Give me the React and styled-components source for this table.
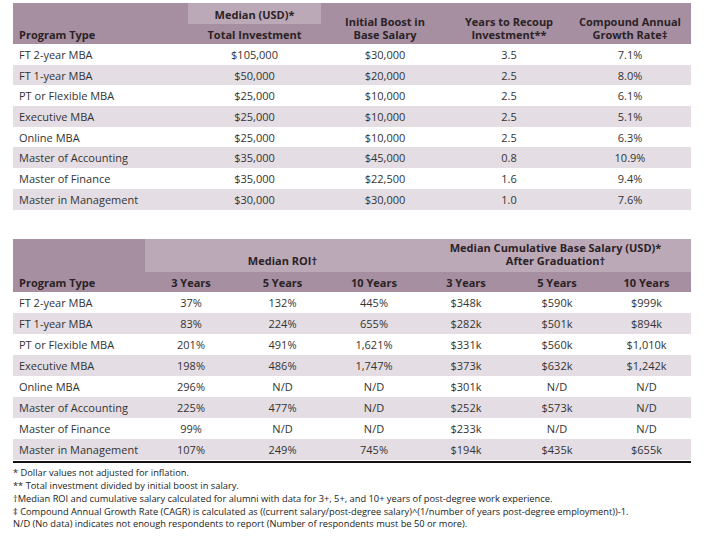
import React from "react";
import styled, { createGlobalStyle } from "styled-components";

const GlobalStyle = createGlobalStyle`
  body {
    margin: 0;
    background: #ffffff;
    font-family: "Open Sans", "Liberation Sans", sans-serif;
  }
`;

const Page = styled.div`
  width: 678px;
  padding: 3px 0 0 13px;
`;

const Table = styled.table`
  width: 678px;
  border-collapse: collapse;
  table-layout: fixed;
  margin-bottom: ${props => props.gap || 0}px;
  font-size: 11px;
  color: #333333;
`;

const Col = styled.col`
  width: ${props => props.w}px;
`;

const Th = styled.th`
  box-sizing: border-box;
  background: ${props => (props.light ? "#bba9b8" : "#a68fa1")};
  color: #2b2226;
  font-weight: 700;
  font-size: 11px;
  line-height: ${props => props.lh || 13}px;
  height: ${props => props.h || 20}px;
  padding: 0 ${props => (props.left ? "6px" : "2px")} ${props => props.pb ?? 3}px;
  text-align: ${props => (props.left ? "left" : "center")};
  vertical-align: bottom;
  white-space: nowrap;
`;

const Row = styled.tr`
  background: ${props => (props.shaded ? "#e4dee4" : "#ffffff")};
`;

const Td = styled.td`
  box-sizing: border-box;
  height: ${props => props.h || 20.7}px;
  padding: 0 ${props => (props.left ? "6px" : "2px")};
  text-align: ${props => (props.left ? "left" : "center")};
  vertical-align: middle;
  white-space: nowrap;
`;

const Rule = styled.div`
  width: 678px;
  height: 2px;
  background: #111111;
  margin-top: 1px;
`;

const Notes = styled.div`
  padding-top: 4px;
  font-size: 9.3px;
  line-height: 12.75px;
  color: #222222;
  white-space: nowrap;
`;

const investment = [
  ["FT 2-year MBA", "$105,000", "$30,000", "3.5", "7.1%"],
  ["FT 1-year MBA", "$50,000", "$20,000", "2.5", "8.0%"],
  ["PT or Flexible MBA", "$25,000", "$10,000", "2.5", "6.1%"],
  ["Executive MBA", "$25,000", "$10,000", "2.5", "5.1%"],
  ["Online MBA", "$25,000", "$10,000", "2.5", "6.3%"],
  ["Master of Accounting", "$35,000", "$45,000", "0.8", "10.9%"],
  ["Master of Finance", "$35,000", "$22,500", "1.6", "9.4%"],
  ["Master in Management", "$30,000", "$30,000", "1.0", "7.6%"],
];

const returns = [
  ["FT 2-year MBA", "37%", "132%", "445%", "$348k", "$590k", "$999k"],
  ["FT 1-year MBA", "83%", "224%", "655%", "$282k", "$501k", "$894k"],
  ["PT or Flexible MBA", "201%", "491%", "1,621%", "$331k", "$560k", "$1,010k"],
  ["Executive MBA", "198%", "486%", "1,747%", "$373k", "$632k", "$1,242k"],
  ["Online MBA", "296%", "N/D", "N/D", "$301k", "N/D", "N/D"],
  ["Master of Accounting", "225%", "477%", "N/D", "$252k", "$573k", "N/D"],
  ["Master of Finance", "99%", "N/D", "N/D", "$233k", "N/D", "N/D"],
  ["Master in Management", "107%", "249%", "745%", "$194k", "$435k", "$655k"],
];

const notes = [
  "* Dollar values not adjusted for inflation.",
  "** Total investment divided by initial boost in salary.",
  "\u2020Median ROI and cumulative salary calculated for alumni with data for 3+, 5+, and 10+ years of post-degree work experience.",
  "\u2021 Compound Annual Growth Rate (CAGR) is calculated as ((current salary/post-degree salary)^(1/number of years post-degree employment))-1.",
  "N/D (No data) indicates not enough respondents to report (Number of respondents must be 50 or more).",
];

const years = ["3 Years", "5 Years", "10 Years", "3 Years", "5 Years", "10 Years"];

export default function App() {
  return (
    <>
      <GlobalStyle />
      <Page>
        <Table gap={29}>
          <colgroup>
            <Col w={175} />
            <Col w={133} />
            <Col w={128} />
            <Col w={120} />
            <Col w={122} />
          </colgroup>
          <thead>
            <tr>
              <Th left rowSpan={2}>Program Type</Th>
              <Th light h={21} pb={3}>Median (USD)*</Th>
              <Th rowSpan={2}>Initial Boost in<br />Base Salary</Th>
              <Th rowSpan={2}>Years to Recoup<br />Investment**</Th>
              <Th rowSpan={2}>Compound Annual<br />Growth Rate{"\u2021"}</Th>
            </tr>
            <tr>
              <Th h={20}>Total Investment</Th>
            </tr>
          </thead>
          <tbody>
            {investment.map((r, i) => (
              <Row key={r[0]} shaded={i % 2 === 1}>
                {r.map((c, j) => (
                  <Td key={j} left={j === 0}>{c}</Td>
                ))}
              </Row>
            ))}
          </tbody>
        </Table>

        <Table>
          <colgroup>
            <Col w={132} />
            <Col w={92} />
            <Col w={91} />
            <Col w={92} />
            <Col w={92} />
            <Col w={90} />
            <Col w={89} />
          </colgroup>
          <thead>
            <tr>
              <Th left rowSpan={2}>Program Type</Th>
              <Th light colSpan={3} h={33} pb={5}>Median ROI{"\u2020"}</Th>
              <Th light colSpan={3} h={33} pb={5}>
                Median Cumulative Base Salary (USD)*<br />After Graduation{"\u2020"}
              </Th>
            </tr>
            <tr>
              {years.map((y, i) => (
                <Th key={i} h={20}>{y}</Th>
              ))}
            </tr>
          </thead>
          <tbody>
            {returns.map((r, i) => (
              <Row key={r[0]} shaded={i % 2 === 1}>
                {r.map((c, j) => (
                  <Td key={j} h={21.1} left={j === 0}>{c}</Td>
                ))}
              </Row>
            ))}
          </tbody>
        </Table>
        <Rule />
        <Notes>
          {notes.map(n => (
            <div key={n}>{n}</div>
          ))}
        </Notes>
      </Page>
    </>
  );
}
